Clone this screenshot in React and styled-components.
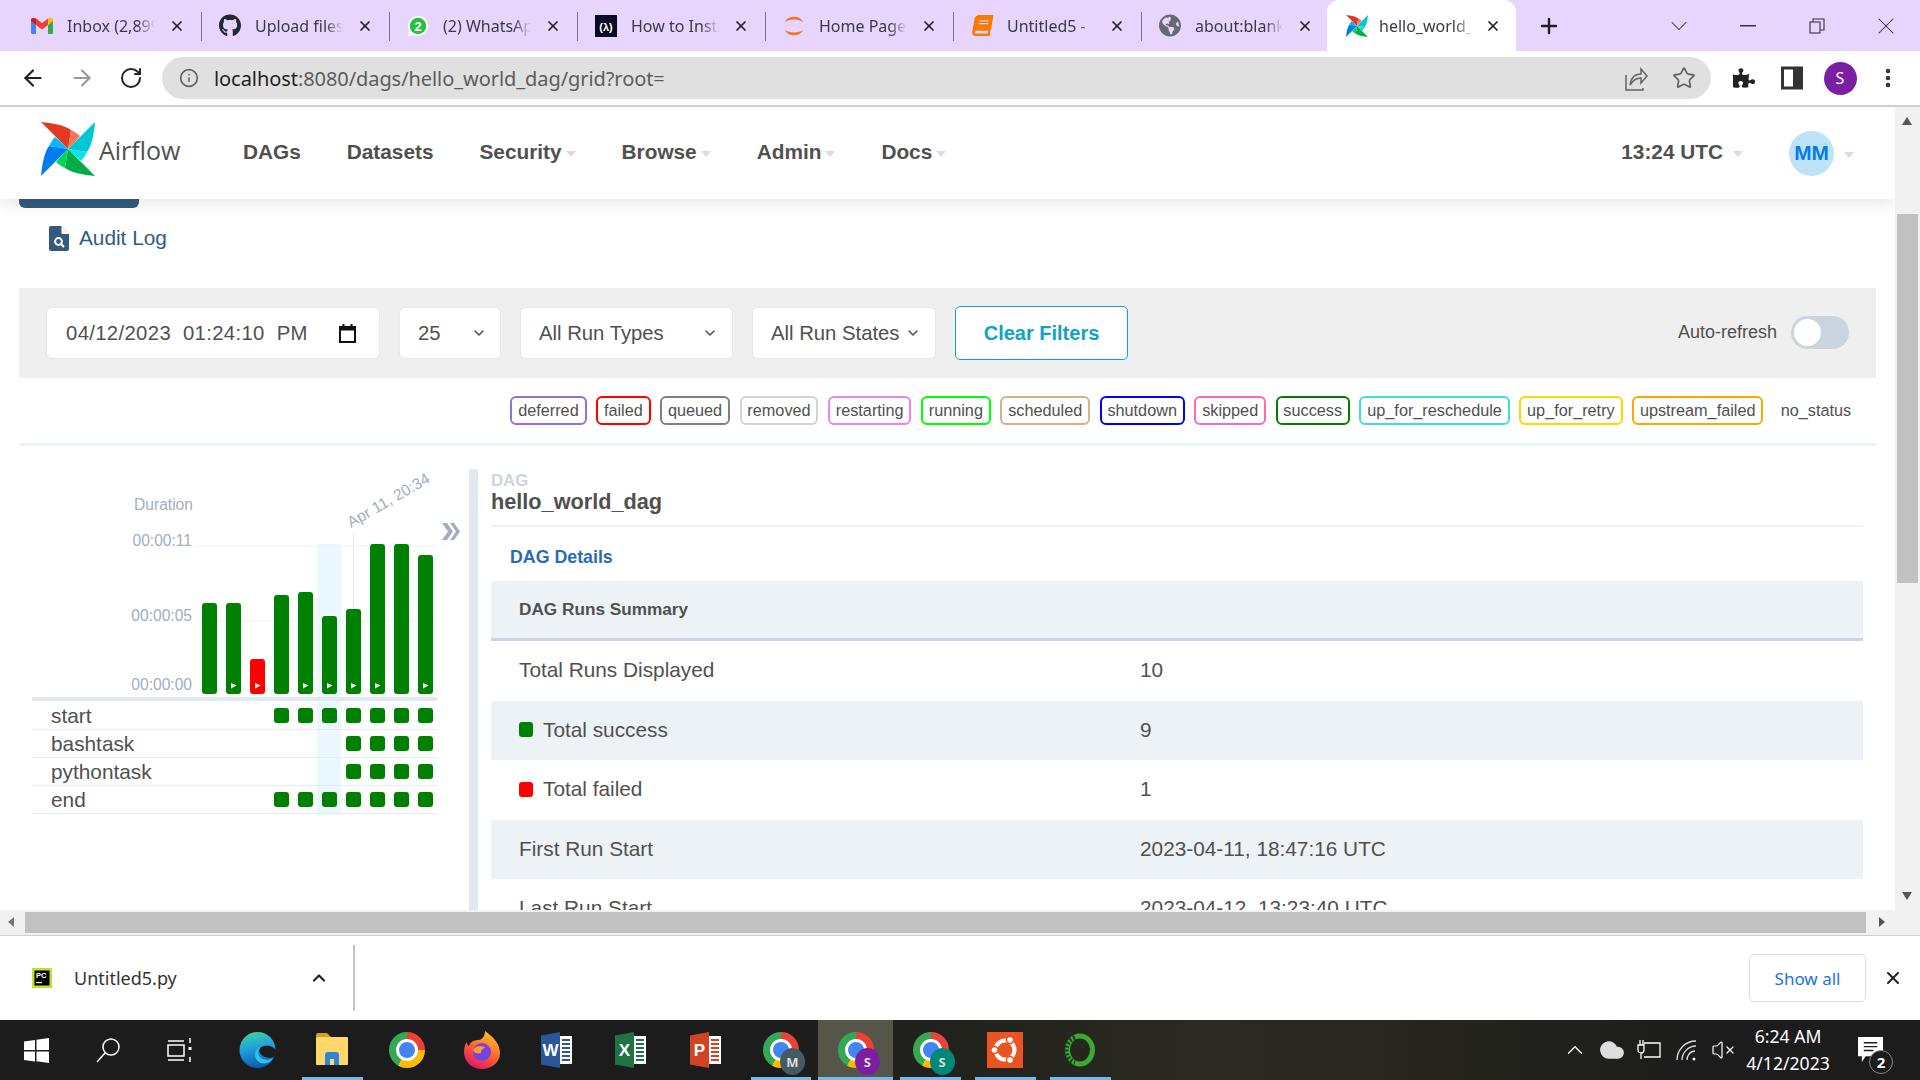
import { createGlobalStyle, styled } from 'styled-components'
import { ArrowLeft, ArrowRight, RotateCw, Info, Star, X, Plus, ChevronDown, ChevronUp, EllipsisVertical, Cloud, VolumeX } from 'lucide-react'
import { FaGithub, FaPuzzlePiece, FaBook, FaGlobeAmericas } from 'react-icons/fa'

const GlobalStyle = createGlobalStyle`
  html, body { margin: 0; padding: 0; height: 100%; overflow: hidden; background: #fff; }
  * { box-sizing: border-box; }
  body { font-family: "Liberation Sans", Arial, sans-serif; color: #51504f; }
`

const Screen = styled.div`
  width: 1920px;
  height: 1080px;
  display: flex;
  flex-direction: column;
  overflow: hidden;
`

/* browser chrome */
const TabStrip = styled.div`
  height: 51px;
  flex: none;
  display: flex;
  align-items: stretch;
  padding-left: 13px;
  background: #e8d5fe;
  font-family: "Noto Sans", sans-serif;
`

const Tab = styled.div`
  position: relative;
  width: ${p => p.$active ? '189px' : '188px'};
  margin-left: ${p => p.$active ? '-2px' : '0'};
  flex: none;
  display: flex;
  align-items: center;
  gap: ${p => p.$active ? '11px' : '14px'};
  padding: 0 ${p => p.$active ? '15px' : '16px'} 0 ${p => p.$active ? '19px' : '18px'};
  background: ${p => p.$active ? '#fff' : 'transparent'};
  border-radius: 12px 12px 0 0;

  &::after {
    content: '';
    display: ${p => p.$sep ? 'block' : 'none'};
    position: absolute;
    right: -1px;
    top: 12px;
    height: 29px;
    width: 1px;
    background: #7d7488;
  }
`

const TabIcon = styled.span`
  width: 22px;
  height: 24px;
  flex: none;
  display: flex;
  align-items: center;
  justify-content: center;
`

const TabTitle = styled.span`
  flex: 1;
  min-width: 0;
  overflow: hidden;
  white-space: nowrap;
  font-size: 16px;
  color: #3c3848;
  -webkit-mask-image: linear-gradient(to right, #000 80%, transparent 100%);
  mask-image: linear-gradient(to right, #000 80%, transparent 100%);
`

const NewTab = styled.span`
  width: 44px;
  margin-left: 11px;
  display: flex;
  align-items: center;
  justify-content: center;
  color: #222;
`

const WindowControls = styled.div`
  margin-left: auto;
  display: flex;
  align-items: center;
  color: #333;
`

const WindowButton = styled.span`
  width: 69px;
  height: 44px;
  display: flex;
  align-items: center;
  justify-content: center;
`

const Toolbar = styled.div`
  height: 56px;
  flex: none;
  display: flex;
  align-items: center;
  padding: 0 8px;
  background: #fff;
  border-bottom: 2px solid #cfcfcf;
`

const ToolButton = styled.span`
  width: ${p => p.$w || 48}px;
  flex: none;
  display: flex;
  align-items: center;
  justify-content: center;
  color: ${p => p.$color || '#222'};
`

const Omnibox = styled.div`
  flex: 1;
  height: 42px;
  margin: 0 9px 0 7px;
  padding: 0 3px 0 17px;
  border-radius: 21px;
  background: #e0e0e0;
  display: flex;
  align-items: center;
  font-family: "Noto Sans", sans-serif;
  font-size: 20px;
  color: #5c5c5c;
`

const Url = styled.span`
  margin-left: 15px;
  flex: 1;
  letter-spacing: -0.07px;

  b { font-weight: 400; color: #1f1f1f; }
`

const ProfileDot = styled.span`
  width: 33px;
  height: 33px;
  border-radius: 50%;
  background: #7b1fa2;
  color: #fff;
  font-size: 16px;
  display: flex;
  align-items: center;
  justify-content: center;
  font-family: "Noto Sans", sans-serif;
`

/* scrolling page area */
const Viewport = styled.div`
  flex: 1;
  min-height: 0;
  display: grid;
  grid-template-columns: 1fr 25px;
  grid-template-rows: 1fr 25px;
  border-bottom: 1px solid #cfcfcf;
`

const PageArea = styled.div`
  overflow: hidden;
  display: flex;
  flex-direction: column;
  background: #fff;
`

const VScroll = styled.div`
  grid-row: 1 / 3;
  grid-column: 2;
  position: relative;
  background: #f1f1f1;
`

const VThumb = styled.div`
  position: absolute;
  left: 2px;
  right: 2px;
  top: 107px;
  height: 369px;
  background: #c1c1c1;
`

const ScrollArrow = styled.span`
  position: absolute;
  width: 0;
  height: 0;
  ${p => p.$dir === 'up' && 'top: 10px; left: 7px; border: 5.5px solid transparent; border-top: 0; border-bottom: 8px solid #555;'}
  ${p => p.$dir === 'down' && 'top: 785px; left: 7px; border: 5.5px solid transparent; border-bottom: 0; border-top: 8px solid #555;'}
  ${p => p.$dir === 'left' && 'top: 7px; left: 8px; border: 5.5px solid transparent; border-left: 0; border-right: 6px solid #777;'}
  ${p => p.$dir === 'right' && 'top: 7px; right: 10px; border: 5.5px solid transparent; border-right: 0; border-left: 6px solid #555;'}
`

const HScroll = styled.div`
  position: relative;
  background: #f1f1f1;
`

const HThumb = styled.div`
  position: absolute;
  left: 25px;
  right: 29px;
  top: 2px;
  bottom: 2px;
  background: #c1c1c1;
`

/* airflow navbar */
const NavBar = styled.header`
  height: 92px;
  flex: none;
  position: relative;
  z-index: 2;
  display: flex;
  align-items: center;
  padding: 0 41px;
  background: #fff;
  box-shadow: 0 4px 16px rgba(0, 0, 0, 0.1);
`

const Brand = styled.div`
  display: flex;
  align-items: center;
  gap: 4px;
  width: 140px;
  margin-top: -9px;
`

const BrandName = styled.span`
  font-family: "Open Sans", sans-serif;
  font-size: 25px;
  color: #51504f;
  margin-top: 2px;
`

const NavList = styled.nav`
  display: flex;
  gap: 46px;
  margin: -2px 0 0 62px;
`

const NavItem = styled.span`
  display: flex;
  align-items: center;
  gap: ${p => p.$gap || 4}px;
  font-size: 20.8px;
  font-weight: 700;
  color: #51504f;
`

const Caret = styled.i`
  width: 0;
  height: 0;
  margin-top: 4px;
  border-left: 5.5px solid transparent;
  border-right: 5.5px solid transparent;
  border-top: 6px solid #e2d6e8;
`

const NavRight = styled.div`
  margin-left: auto;
  display: flex;
  align-items: center;
  gap: 46px;

  ${NavItem} { margin-top: -2px; }
`

const Avatar = styled.span`
  display: flex;
  align-items: center;
  gap: 10px;

  b {
    width: 45px;
    height: 45px;
    border-radius: 50%;
    background: #bee3f8;
    color: #017cee;
    font-size: 20.8px;
    display: flex;
    align-items: center;
    justify-content: center;
  }
`

const Page = styled.main`
  flex: 1;
  min-height: 0;
  padding: 0 19px;
`

const CutButton = styled.div`
  width: 120px;
  height: 9px;
  background: #335b7d;
  border-radius: 0 0 6px 6px;
`

const AuditLink = styled.a`
  height: 46px;
  margin: 7px 0 0 30px;
  display: flex;
  align-items: center;
  gap: 10px;
  font-size: 20.8px;
  color: #335b7d;
`

const FilterPanel = styled.section`
  height: 90px;
  margin-top: 27px;
  padding: 0 27px;
  background: #efefef;
  display: flex;
  align-items: center;
  gap: 19px;
`

const Field = styled.div`
  width: ${p => p.$w}px;
  height: 52px;
  flex: none;
  padding: 0 ${p => p.$pr}px 0 ${p => p.$pl}px;
  display: flex;
  align-items: center;
  justify-content: space-between;
  background: #fff;
  border: 1px solid #e2e8f0;
  border-radius: 6px;
  font-size: 20.3px;
  letter-spacing: ${p => p.$spaced ? '0.35px' : '0'};
  color: #51504f;
  white-space: pre;
`

const ClearButton = styled.button`
  width: 173px;
  height: 54px;
  flex: none;
  background: #fff;
  border: 1.5px solid #11a3c4;
  border-radius: 5px;
  font-family: inherit;
  font-size: 20px;
  font-weight: 700;
  color: #0fa3c4;
`

const AutoRefresh = styled.label`
  margin-left: auto;
  display: flex;
  align-items: center;
  gap: 14px;
  margin-top: -2px;
  font-size: 18px;
  color: #51504f;
`

const Toggle = styled.span`
  width: 58px;
  height: 33px;
  padding: 3px;
  border-radius: 17px;
  background: #cbd5e0;

  &::before {
    content: '';
    display: block;
    width: 27px;
    height: 27px;
    border-radius: 50%;
    background: #fff;
  }
`

const Legend = styled.div`
  height: 68px;
  padding: 18px 17px 0 0;
  display: flex;
  justify-content: flex-end;
  gap: 9.5px;
  border-bottom: 3px solid #edf2f7;
`

const Pill = styled.span`
  height: 29px;
  padding: 0 5.85px;
  display: flex;
  align-items: center;
  border: 2.6px solid ${p => p.$color};
  border-radius: 6px;
  font-size: 16.25px;
  color: #51504f;
`

const Workspace = styled.div`
  margin-top: 23px;
  display: flex;
`

const GridPanel = styled.div`
  position: relative;
  width: 450px;
  flex: none;
`

const ChartSvg = styled.svg`
  position: relative;
  z-index: 1;
  display: block;
`

const SelectedColumn = styled.div`
  position: absolute;
  left: 298px;
  top: 75px;
  width: 24px;
  height: 269px;
  background: #ebf8ff;
`

const TaskRows = styled.div`
  position: relative;
  z-index: 1;
  margin: 1px 0 0 13px;
  width: 405px;
`

const TaskRow = styled.div`
  height: 28px;
  display: flex;
  align-items: center;
  padding: 0 4px 0 19px;
  border-bottom: 1px solid #e6ebf1;
  font-size: 20.8px;
  color: #51504f;
`

const TaskName = styled.span`
  margin-right: auto;
`

const Squares = styled.span`
  display: flex;
  gap: 9px;
`

const Square = styled.i`
  width: 15px;
  height: 15px;
  border-radius: 3px;
  background: green;
`

const Splitter = styled.div`
  width: 9px;
  flex: none;
  height: 460px;
  background: #e2e8f0;
`

const Details = styled.div`
  flex: 1;
  min-width: 0;
  margin: 0 13px 0 13px;
`

const DetailsHead = styled.div`
  padding-top: 2px;
  height: 58px;
  border-bottom: 2px solid #edf2f7;
`

const DagLabel = styled.div`
  font-size: 16.8px;
  line-height: 20px;
  font-weight: 700;
  color: #cbd5e0;
`

const DagTitle = styled.div`
  margin-top: -1px;
  font-size: 21.7px;
  line-height: 24px;
  font-weight: 700;
  color: #51504f;
`

const DetailsLink = styled.a`
  height: 54px;
  padding: 6px 0 0 19px;
  display: flex;
  align-items: center;
  font-size: 17.8px;
  font-weight: 700;
  color: #2b6cb0;
`

const SummaryHead = styled.div`
  height: 60px;
  padding: 0 0 0 28px;
  display: flex;
  align-items: center;
  background: #edf2f7;
  border-bottom: 3px solid #cbd5e0;
  font-size: 17.2px;
  font-weight: 700;
  color: #51504f;
`

const SummaryRow = styled.div`
  height: 59.5px;
  padding: 0 0 1px 28px;
  display: grid;
  grid-template-columns: 621px 1fr;
  align-items: center;
  background: ${p => p.$striped ? '#edf2f7' : '#fff'};
  font-size: 20.8px;
  color: #51504f;
`

const RowLabel = styled.span`
  display: flex;
  align-items: center;
  gap: 10px;
`

const StateDot = styled.i`
  width: 14px;
  height: 15px;
  border-radius: 3px;
  background: ${p => p.$color};
`

/* download shelf */
const Shelf = styled.div`
  height: 84px;
  flex: none;
  display: flex;
  align-items: center;
  background: #fff;
  padding-left: 32px;
  font-family: "Noto Sans", sans-serif;
`

const ShelfFile = styled.div`
  width: 323px;
  height: 66px;
  display: flex;
  align-items: center;
  border-right: 2px solid #c4c4c4;
  font-size: 18px;
  color: #333;
`

const ShelfName = styled.span`
  margin-left: 22px;
  width: 235px;
`

const ShowAll = styled.button`
  width: 117px;
  height: 48px;
  margin-left: auto;
  background: #fff;
  border: 1px solid #dcdcdc;
  border-radius: 5px;
  font-family: inherit;
  font-size: 17px;
  color: #1a73e8;
`

const ShelfClose = styled.span`
  width: 54px;
  display: flex;
  justify-content: center;
  color: #222;
`

/* windows taskbar */
const Taskbar = styled.footer`
  height: 60px;
  flex: none;
  display: flex;
  align-items: center;
  background: linear-gradient(to right, #1c1c1c 0 40%, #2a2a20 62%, #29291f 70%, #1c1c1c 88%);
  color: #fff;
  font-family: "Noto Sans", sans-serif;
`

const SystemButton = styled.span`
  width: 72px;
  height: 60px;
  flex: none;
  display: flex;
  align-items: center;
  justify-content: center;
`

const AppButton = styled.span`
  position: relative;
  width: 74.8px;
  height: 60px;
  flex: none;
  display: flex;
  align-items: center;
  justify-content: center;
  background: ${p => p.$active ? '#55554a' : 'transparent'};

  &::after {
    content: '';
    display: ${p => p.$open ? 'block' : 'none'};
    position: absolute;
    bottom: 0;
    left: ${p => p.$active ? 0 : 7}px;
    right: ${p => p.$active ? 0 : 7}px;
    height: 3px;
    background: #76b9ed;
  }
`

const Apps = styled.div`
  display: flex;
  margin-left: 4px;
`

const Tray = styled.div`
  margin-left: auto;
  display: flex;
  align-items: center;
  height: 100%;
`

const TrayIcon = styled.span`
  width: 37px;
  display: flex;
  align-items: center;
  justify-content: center;
`

const Clock = styled.div`
  width: 88px;
  margin-left: 3px;
  text-align: center;
  font-size: 17.6px;
  line-height: 27px;
  white-space: nowrap;
`

const Notify = styled.span`
  position: relative;
  width: 88px;
  padding-left: 26px;
  display: flex;
`

const NotifyCount = styled.b`
  position: absolute;
  left: 37px;
  top: 13px;
  width: 24px;
  height: 24px;
  border-radius: 50%;
  background: #1c1c1c;
  border: 1px solid #888;
  font-size: 15px;
  font-weight: 700;
  display: flex;
  align-items: center;
  justify-content: center;
`

const ChromeDisc = styled.span`
  position: relative;
  width: 36px;
  height: 36px;
  border-radius: 50%;
  background: conic-gradient(#ea4335 -30deg 90deg, #fbbc04 90deg 210deg, #34a853 210deg 330deg);

  &::before {
    content: '';
    position: absolute;
    inset: 10px;
    border-radius: 50%;
    background: #4285f4;
    box-shadow: 0 0 0 3px #fff;
  }
`

const ChromeBadge = styled.b`
  position: absolute;
  right: -6px;
  bottom: -7px;
  width: 25px;
  height: 27px;
  border-radius: 50%;
  background: ${p => p.$color};
  color: #ddd;
  font-size: 13px;
  display: flex;
  align-items: center;
  justify-content: center;
`

const BLADES = [
  { angle: 0, main: '#e43921', light: '#ff7557' },
  { angle: 90, main: '#00c7d4', light: '#11e1ee' },
  { angle: 180, main: '#00ad46', light: '#04d659' },
  { angle: 270, main: '#017cee', light: '#0cb6ff' }
]

const Pinwheel = ({ size }) => (
  <svg width={size} height={size} viewBox="-27 -27 54 54">
    {BLADES.map(b => (
      <g key={b.angle} transform={`rotate(${b.angle})`}>
        <path d="M0 0L-27 -27C-16 -26 -4 -24 3 -19C2 -12 1 -6 0 0Z" fill={b.main} />
        <path d="M0 0L3 -19C7 -17 10 -15 12 -13C8 -8 4 -4 0 0Z" fill={b.light} />
      </g>
    ))}
  </svg>
)

const GmailIcon = () => (
  <svg width="22" height="17" viewBox="0 0 22 17">
    <path d="M0 3v12.500A1.500 1.500 0 0 0 1.500 17H5V8z" fill="#4285f4" />
    <path d="M22 3v12.500a1.500 1.500 0 0 1-1.500 1.500H17V8z" fill="#34a853" />
    <path d="M17 1.500V8l5-4V3c0-2-2.300-3-4-1.700z" fill="#fbbc04" />
    <path d="M5 8V1.500L11 6l6-4.500V8l-6 4.500z" fill="#ea4335" />
    <path d="M0 3v1l5 4V1.500L4 1.300C2.300 0 0 1 0 3z" fill="#c5221f" />
  </svg>
)

const WhatsappIcon = () => (
  <svg width="24" height="24" viewBox="0 0 24 24">
    <path d="M12 1a11 11 0 1 1-5.500 20.500L1 23l1.500-5.500A11 11 0 0 1 12 1z" fill="#fff" />
    <circle cx="12" cy="12" r="9" fill="#25c13f" />
    <text x="12" y="17" textAnchor="middle" fontSize="14" fontWeight="700" fontFamily="Liberation Sans" fill="#fff">2</text>
  </svg>
)

const FreeCodeCampIcon = () => (
  <svg width="24" height="24" viewBox="0 0 24 24">
    <rect width="24" height="24" fill="#0a0a23" />
    <text x="12" y="17" textAnchor="middle" fontSize="12" fontWeight="700" fontFamily="Liberation Sans" fill="#fff">(λ)</text>
  </svg>
)

const JupyterIcon = () => (
  <svg width="24" height="26" viewBox="0 0 24 26">
    <path d="M2 9C5 1 19 1 22 9C18 5 6 5 2 9Z" fill="#f37726" />
    <path d="M2 17C5 25 19 25 22 17C18 21 6 21 2 17Z" fill="#f37726" />
  </svg>
)

const ShareIcon = () => (
  <svg width="24" height="26" viewBox="0 0 24 26" fill="none" stroke="#5f6368" strokeWidth="1.500">
    <path d="M2 10v15h17v-2" />
    <path d="M6 20c1-7 5-11 11-11V4l6 7-6 7v-5c-5 0-8 2-11 7z" />
  </svg>
)

const SidePanelIcon = () => (
  <svg width="22" height="24" viewBox="0 0 22 24">
    <rect x="1.500" y="2" width="19" height="20" fill="none" stroke="#333" strokeWidth="3" />
    <rect x="12" y="2" width="8" height="20" fill="#333" />
  </svg>
)

const RestoreIcon = () => (
  <svg width="16" height="16" viewBox="0 0 16 16" fill="none" stroke="#333" strokeWidth="1.100">
    <rect x="1" y="4" width="10" height="11" fill="#e8d5fe" />
    <path d="M4 4V1h11v11h-4" />
  </svg>
)

const CalendarIcon = () => (
  <svg width="17" height="19" viewBox="0 0 17 19">
    <rect x="1" y="3" width="15" height="15" fill="none" stroke="#111" strokeWidth="2" />
    <rect x="1" y="3" width="15" height="3.500" fill="#111" />
    <path d="M4.500 0v3M12.500 0v3" stroke="#111" strokeWidth="2" />
  </svg>
)

const AuditIcon = () => (
  <svg width="20" height="25" viewBox="0 0 20 25">
    <path d="M2 0h10.500L20 8v15a2 2 0 0 1-2 2H2a2 2 0 0 1-2-2V2a2 2 0 0 1 2-2z" fill="#335b7d" />
    <path d="M12.500 0v7a1 1 0 0 0 1 1H20z" fill="#fff" />
    <circle cx="9.500" cy="15.500" r="3.400" fill="none" stroke="#fff" strokeWidth="2" />
    <path d="M12 18l3 3" stroke="#fff" strokeWidth="2.200" />
  </svg>
)

const PyCharmIcon = () => (
  <svg width="20" height="20" viewBox="0 0 20 20">
    <rect width="20" height="20" fill="#c4e024" />
    <rect x="2.500" y="2.500" width="15" height="15" fill="#000" />
    <text x="4" y="10" fontSize="7.500" fontWeight="700" fontFamily="Liberation Sans" fill="#fff">PC</text>
    <rect x="4" y="14" width="6" height="1.200" fill="#fff" />
  </svg>
)

const WindowsLogo = () => (
  <svg width="25" height="25" viewBox="0 0 25 25" fill="#fff">
    <path d="M0 3.500l11-1.500v10H0zM12.500 1.800L25 0v12H12.500zM0 13.500h11v10L0 22zM12.500 13.500H25V25l-12.500-1.800z" />
  </svg>
)

const SearchIcon = () => (
  <svg width="26" height="26" viewBox="0 0 26 26" fill="none" stroke="#fff" strokeWidth="1.500">
    <circle cx="16" cy="10" r="8" />
    <path d="M10 16L2 25" />
  </svg>
)

const TaskViewIcon = () => (
  <svg width="26" height="24" viewBox="0 0 26 24" fill="none" stroke="#fff" strokeWidth="1.500">
    <rect x="1" y="7" width="16" height="11" />
    <path d="M1 3h16M1 22h16M23 0v5M23 19v5" />
    <path d="M23 9v3" strokeWidth="3" />
  </svg>
)

const EdgeIcon = () => (
  <svg width="37" height="36" viewBox="0 0 37 36">
    <defs>
      <linearGradient id="edgeFill" x1="0.300" y1="0" x2="0.500" y2="1">
        <stop offset="0" stopColor="#3fd0a0" />
        <stop offset="0.450" stopColor="#1f9fe0" />
        <stop offset="1" stopColor="#0c59a4" />
      </linearGradient>
    </defs>
    <circle cx="18.500" cy="18" r="18" fill="url(#edgeFill)" />
    <path d="M37 19C36 15 30 13 25 14C21 15 19 18 21 21C23 25 30 27 35 25C36 23 37 21 37 19Z" fill="#1c1c1c" />
    <path d="M20 30C26 33 31 31 34 26C29 29 24 28 21 25C18 22 19 18 21 15C15 18 14 26 20 30Z" fill="#2bc3e8" />
  </svg>
)

const FolderIcon = () => (
  <svg width="32" height="36" viewBox="0 0 32 36">
    <path d="M0 3a2 2 0 0 1 2-2h9l4 4H0z" fill="#d99e1a" />
    <rect y="5" width="32" height="28" rx="1" fill="#ffd76a" />
    <path d="M9 33V23a3 3 0 0 1 3-3h8a3 3 0 0 1 3 3v10h-5v-6h-4v6z" fill="#2f86d6" />
  </svg>
)

const FirefoxIcon = () => (
  <svg width="36" height="38" viewBox="0 0 36 38">
    <defs>
      <linearGradient id="foxFill" x1="0.800" y1="0" x2="0.300" y2="1">
        <stop offset="0" stopColor="#ffcb2e" />
        <stop offset="0.500" stopColor="#ff6a2a" />
        <stop offset="1" stopColor="#e3136b" />
      </linearGradient>
    </defs>
    <path d="M18 38C7 38 0 30 0 21C0 17 1 13 3 11C3 13 4 15 5 15C6 11 10 9 15 9C19 8 21 4 21 0C28 5 36 12 36 22C36 31 28 38 18 38Z" fill="url(#foxFill)" />
    <circle cx="18" cy="21" r="9" fill="#7542e5" />
    <path d="M9 19C12 14 18 14 22 17C19 17 17 19 17 22C13 23 10 22 9 19Z" fill="#ff9a2e" />
  </svg>
)

const OfficeIcon = ({ letter, color }) => (
  <svg width="32" height="36" viewBox="0 0 32 36">
    <path d="M0 3.500L19 0v36L0 32.500z" fill={color} />
    <rect x="19" y="4" width="12" height="28" fill="#fff" />
    <path d="M21 8h8M21 12h8M21 16h8M21 20h8M21 24h8M21 28h8" stroke={color} strokeWidth="2" />
    <text x="9.500" y="24" textAnchor="middle" fontSize="17" fontWeight="700" fontFamily="Liberation Sans" fill="#fff">{letter}</text>
  </svg>
)

const UbuntuIcon = () => (
  <svg width="36" height="36" viewBox="0 0 36 36">
    <rect width="36" height="36" fill="#e95420" />
    <circle cx="18" cy="18" r="9.500" fill="none" stroke="#fff" strokeWidth="4" />
    <g fill="#fff" stroke="#e95420" strokeWidth="1.500">
      <circle cx="23" cy="8" r="3.500" />
      <circle cx="7.500" cy="18" r="3.500" />
      <circle cx="23" cy="28" r="3.500" />
    </g>
  </svg>
)

const RingIcon = () => (
  <svg width="34" height="36" viewBox="0 0 34 36" fill="none">
    <ellipse cx="17" cy="18" rx="12.500" ry="14" stroke="#3aaa35" strokeWidth="5" />
    <path d="M12 5.500C6 7.500 3 12.500 3 18C3 24 6 28.500 12 30.500" stroke="#14401a" strokeWidth="5" strokeDasharray="2 2" />
  </svg>
)

const BatteryIcon = () => (
  <svg width="26" height="24" viewBox="0 0 26 24" fill="none" stroke="#fff" strokeWidth="1.300">
    <path d="M8 5h16v14H8M2 7h6v5a3 3 0 0 1-6 0zM5 15v6M4 7V2M7 7V2" />
  </svg>
)

const WifiQuarter = () => (
  <svg width="24" height="24" viewBox="0 0 24 24" fill="none" stroke="#ddd" strokeWidth="1.300">
    <path d="M3 22C3 12 11 3 22 3M8 22C8 15 14 8 22 8M13 22C13 18 16 13 21 13" />
    <circle cx="20" cy="21" r="1.500" fill="#fff" stroke="none" />
  </svg>
)

const NotifyIcon = () => (
  <svg width="25" height="26" viewBox="0 0 26 27">
    <path d="M0 0h26v20H8l-4 6v-6H0z" fill="#fff" />
    <path d="M6 6h14M6 10h14M6 14h10" stroke="#1c1c1c" strokeWidth="1.500" />
  </svg>
)

const TABS = [
  { title: 'Inbox (2,899) - ', icon: <GmailIcon /> },
  { title: 'Upload files to', icon: <FaGithub size={25} color="#24292f" /> },
  { title: '(2) WhatsApp', icon: <WhatsappIcon /> },
  { title: 'How to Install', icon: <FreeCodeCampIcon /> },
  { title: 'Home Page -', icon: <JupyterIcon /> },
  { title: 'Untitled5 -', icon: <FaBook size={21} color="#f57c00" style={{ transform: 'skewX(-10deg)' }} /> },
  { title: 'about:blank', icon: <FaGlobeAmericas size={23} color="#666a70" />, noSep: true }
]

const LEGEND = [
  ['deferred', 'mediumpurple'],
  ['failed', 'red'],
  ['queued', 'gray'],
  ['removed', 'lightgrey'],
  ['restarting', 'violet'],
  ['running', 'lime'],
  ['scheduled', 'tan'],
  ['shutdown', 'blue'],
  ['skipped', 'hotpink'],
  ['success', 'green'],
  ['up_for_reschedule', 'turquoise'],
  ['up_for_retry', 'gold'],
  ['upstream_failed', 'orange'],
  ['no_status', 'transparent']
]

const BAR_LEFT = 202
const BAR_BOTTOM = 694
const BARS = [
  { top: 603 },
  { top: 603, play: true },
  { top: 659, play: true, color: 'red' },
  { top: 595 },
  { top: 592, play: true },
  { top: 616, play: true },
  { top: 609, play: true },
  { top: 544, play: true },
  { top: 544 },
  { top: 555, play: true }
]

const TICKS = [
  { label: '00:00:11', text: 546, line: 546 },
  { label: '00:00:05', text: 621, line: 621 },
  { label: '00:00:00', text: 690, line: 690 }
]

const TASKS = [
  { name: 'start', count: 7 },
  { name: 'bashtask', count: 4 },
  { name: 'pythontask', count: 4 },
  { name: 'end', count: 7 }
]

const SUMMARY = [
  { label: 'Total Runs Displayed', value: '10' },
  { label: 'Total success', value: '9', dot: 'green' },
  { label: 'Total failed', value: '1', dot: 'red' },
  { label: 'First Run Start', value: '2023-04-11, 18:47:16 UTC' },
  { label: 'Last Run Start', value: '2023-04-12, 13:23:40 UTC' }
]

const axisText = { fontSize: 15.6, fill: '#a0aec0', fontFamily: 'Liberation Sans' }

const RunsChart = () => (
  <ChartSvg width="450" height="232" viewBox="19 469 450 232">
    <text x="134" y="510" {...axisText}>Duration</text>
    {TICKS.map(t => (
      <g key={t.label}>
        <text x="192" y={t.text} textAnchor="end" {...axisText}>{t.label}</text>
        <line x1="197" x2="437" y1={t.line} y2={t.line} stroke="#edf2f7" />
      </g>
    ))}
    <line x1="353.500" x2="353.500" y1="533" y2="609" stroke="#e2e8f0" />
    <text transform="translate(351 528) rotate(-30)" {...axisText}>Apr 11, 20:34</text>
    <path d="M442 523h5l6 8.500-6 8.500h-5l6-8.500zM450 523h4l6 8.500-6 8.500h-4l6-8.500z" fill="#a0aec0" />
    {BARS.map((b, i) => {
      const x = BAR_LEFT + i * 24
      return (
        <g key={i}>
          <rect x={x} y={b.top} width="15" height={BAR_BOTTOM - b.top} rx="3" fill={b.color || 'green'} />
          {b.play && <polygon points={`${x + 5},683 ${x + 10.500},685.500 ${x + 5},688.500`} fill="#fff" />}
        </g>
      )
    })}
    <rect x="32" y="697" width="405" height="4" fill="#e2e8f0" />
  </ChartSvg>
)

const App = () => (
  <Screen>
    <GlobalStyle />
    <TabStrip>
      {TABS.map(t => (
        <Tab key={t.title} $sep={!t.noSep}>
          <TabIcon>{t.icon}</TabIcon>
          <TabTitle>{t.title}</TabTitle>
          <X size={16} strokeWidth={2.6} color="#222" />
        </Tab>
      ))}
      <Tab $active>
        <TabIcon><Pinwheel size={24} /></TabIcon>
        <TabTitle>hello_world_dag</TabTitle>
        <X size={16} strokeWidth={2.6} color="#222" />
      </Tab>
      <NewTab><Plus size={24} strokeWidth={2.4} /></NewTab>
      <WindowControls>
        <WindowButton><ChevronDown size={28} strokeWidth={0.9} /></WindowButton>
        <WindowButton><svg width="16" height="2"><rect width="16" height="1.500" fill="#333" /></svg></WindowButton>
        <WindowButton><RestoreIcon /></WindowButton>
        <WindowButton><X size={28} strokeWidth={0.9} /></WindowButton>
      </WindowControls>
    </TabStrip>

    <Toolbar>
      <ToolButton $w={49}><ArrowLeft size={26} /></ToolButton>
      <ToolButton $w={49} $color="#9a9a9a"><ArrowRight size={26} /></ToolButton>
      <ToolButton $w={49}><RotateCw size={24} /></ToolButton>
      <Omnibox>
        <Info size={20} color="#5f6368" />
        <Url><b>localhost</b>:8080/dags/hello_world_dag/grid?root=</Url>
        <ToolButton $w={48}><ShareIcon /></ToolButton>
        <ToolButton $w={48} $color="#5f6368"><Star size={24} strokeWidth={1.7} /></ToolButton>
      </Omnibox>
      <ToolButton><FaPuzzlePiece size={22} /></ToolButton>
      <ToolButton><SidePanelIcon /></ToolButton>
      <ToolButton><ProfileDot>S</ProfileDot></ToolButton>
      <ToolButton><EllipsisVertical size={24} strokeWidth={2.6} color="#333" /></ToolButton>
    </Toolbar>

    <Viewport>
      <PageArea>
        <NavBar>
          <Brand>
            <Pinwheel size={54} />
            <BrandName>Airflow</BrandName>
          </Brand>
          <NavList>
            <NavItem>DAGs</NavItem>
            <NavItem>Datasets</NavItem>
            <NavItem>Security<Caret /></NavItem>
            <NavItem>Browse<Caret /></NavItem>
            <NavItem>Admin<Caret /></NavItem>
            <NavItem>Docs<Caret /></NavItem>
          </NavList>
          <NavRight>
            <NavItem $gap={10}>13:24 UTC<Caret /></NavItem>
            <Avatar><b>MM</b><Caret /></Avatar>
          </NavRight>
        </NavBar>
        <Page>
          <CutButton />
          <AuditLink><AuditIcon />Audit Log</AuditLink>
          <FilterPanel>
            <Field $w={334} $pl={19} $pr={23} $spaced>
              {'04/12/2023  01:24:10  PM'}
              <CalendarIcon />
            </Field>
            <Field $w={102} $pl={18} $pr={13}>25<ChevronDown size={16} strokeWidth={2.4} /></Field>
            <Field $w={213} $pl={18} $pr={14}>All Run Types<ChevronDown size={16} strokeWidth={2.4} /></Field>
            <Field $w={184} $pl={18} $pr={14}>All Run States<ChevronDown size={16} strokeWidth={2.4} /></Field>
            <ClearButton>Clear Filters</ClearButton>
            <AutoRefresh>Auto-refresh<Toggle /></AutoRefresh>
          </FilterPanel>
          <Legend>
            {LEGEND.map(([name, color]) => <Pill key={name} $color={color}>{name}</Pill>)}
          </Legend>
          <Workspace>
            <GridPanel>
              <SelectedColumn />
              <RunsChart />
              <TaskRows>
                {TASKS.map(t => (
                  <TaskRow key={t.name}>
                    <TaskName>{t.name}</TaskName>
                    <Squares>
                      {Array.from({ length: t.count }, (_, i) => <Square key={i} />)}
                    </Squares>
                  </TaskRow>
                ))}
              </TaskRows>
            </GridPanel>
            <Splitter />
            <Details>
              <DetailsHead>
                <DagLabel>DAG</DagLabel>
                <DagTitle>hello_world_dag</DagTitle>
              </DetailsHead>
              <DetailsLink>DAG Details</DetailsLink>
              <SummaryHead>DAG Runs Summary</SummaryHead>
              {SUMMARY.map((r, i) => (
                <SummaryRow key={r.label} $striped={i % 2 === 1}>
                  <RowLabel>{r.dot && <StateDot $color={r.dot} />}{r.label}</RowLabel>
                  <span>{r.value}</span>
                </SummaryRow>
              ))}
            </Details>
          </Workspace>
        </Page>
      </PageArea>
      <VScroll>
        <ScrollArrow $dir="up" />
        <VThumb />
        <ScrollArrow $dir="down" />
      </VScroll>
      <HScroll>
        <ScrollArrow $dir="left" />
        <HThumb />
        <ScrollArrow $dir="right" />
      </HScroll>
    </Viewport>

    <Shelf>
      <ShelfFile>
        <PyCharmIcon />
        <ShelfName>Untitled5.py</ShelfName>
        <ChevronUp size={20} strokeWidth={2.6} color="#222" />
      </ShelfFile>
      <ShowAll>Show all</ShowAll>
      <ShelfClose><X size={20} strokeWidth={2.4} /></ShelfClose>
    </Shelf>

    <Taskbar>
      <SystemButton><WindowsLogo /></SystemButton>
      <SystemButton><SearchIcon /></SystemButton>
      <SystemButton><TaskViewIcon /></SystemButton>
      <Apps>
        <AppButton><EdgeIcon /></AppButton>
        <AppButton $open><FolderIcon /></AppButton>
        <AppButton><ChromeDisc /></AppButton>
        <AppButton><FirefoxIcon /></AppButton>
        <AppButton><OfficeIcon letter="W" color="#2b579a" /></AppButton>
        <AppButton><OfficeIcon letter="X" color="#217346" /></AppButton>
        <AppButton><OfficeIcon letter="P" color="#d04423" /></AppButton>
        <AppButton $open><ChromeDisc><ChromeBadge $color="#455a64">M</ChromeBadge></ChromeDisc></AppButton>
        <AppButton $open $active><ChromeDisc><ChromeBadge $color="#7b1fa2">S</ChromeBadge></ChromeDisc></AppButton>
        <AppButton $open><ChromeDisc><ChromeBadge $color="#00897b">S</ChromeBadge></ChromeDisc></AppButton>
        <AppButton $open><UbuntuIcon /></AppButton>
        <AppButton $open><RingIcon /></AppButton>
      </Apps>
      <Tray>
        <TrayIcon><ChevronUp size={26} strokeWidth={1.2} /></TrayIcon>
        <TrayIcon><Cloud size={26} fill="#ddd" stroke="#ddd" /></TrayIcon>
        <TrayIcon><BatteryIcon /></TrayIcon>
        <TrayIcon><WifiQuarter /></TrayIcon>
        <TrayIcon><VolumeX size={24} strokeWidth={1.2} /></TrayIcon>
        <Clock>6:24 AM<br />4/12/2023</Clock>
        <Notify><NotifyIcon /><NotifyCount>2</NotifyCount></Notify>
      </Tray>
    </Taskbar>
  </Screen>
)

export default App
